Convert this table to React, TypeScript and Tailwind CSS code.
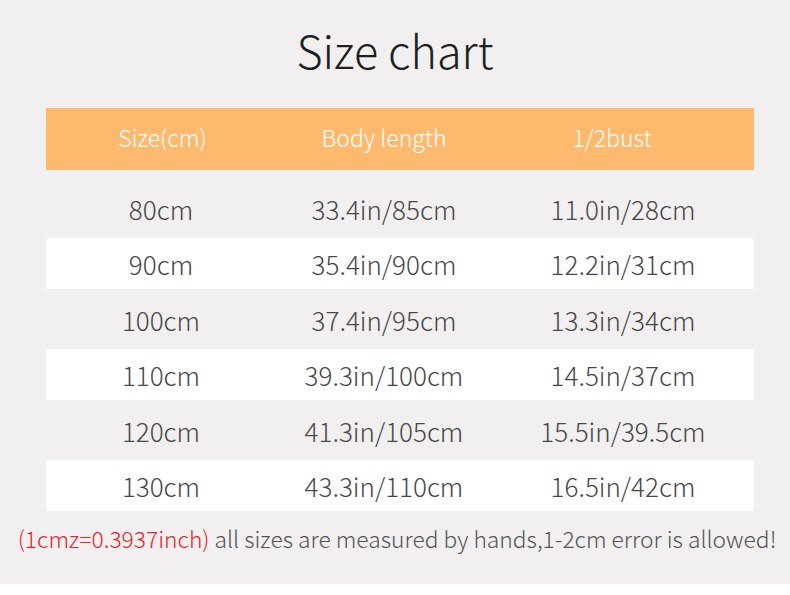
const rows = [
  ['80cm', '33.4in/85cm', '11.0in/28cm'],
  ['90cm', '35.4in/90cm', '12.2in/31cm'],
  ['100cm', '37.4in/95cm', '13.3in/34cm'],
  ['110cm', '39.3in/100cm', '14.5in/37cm'],
  ['120cm', '41.3in/105cm', '15.5in/39.5cm'],
  ['130cm', '43.3in/110cm', '16.5in/42cm'],
]

export default function App() {
  return (
    <div className="w-[790px] h-[595px] bg-white font-['Noto_Sans_CJK_SC','Noto_Sans',sans-serif] font-light">
      <div className="h-[584px] bg-[#f1efef]">
        <h1 className="pt-[27px] text-center text-[45px] leading-none font-light text-[#1f1f1f]">
          Size chart
        </h1>

        <div className="mt-[36px] ml-[46px] w-[708px]">
          <div className="grid h-[62px] grid-cols-[230px_216px_262px] items-center bg-[#fdb96e] pb-[4px] text-[23px] leading-none text-white">
            <div className="text-center pl-[3px]">Size(cm)</div>
            <div className="text-center">Body length</div>
            <div className="text-center pr-[22px]">1/2bust</div>
          </div>

          <div className="pt-[8px]">
            {rows.map((r, i) => (
              <div
                key={r[0]}
                className={
                  i % 2 === 1
                    ? 'grid h-[51px] grid-cols-[230px_216px_262px] items-center bg-white text-[26px] leading-none text-[#474747]'
                    : 'grid h-[60px] grid-cols-[230px_216px_262px] items-center text-[26px] leading-none text-[#474747]'
                }
              >
                {r.map((c) => (
                  <div key={c} className="text-center pt-[1px]">
                    {c}
                  </div>
                ))}
              </div>
            ))}
          </div>
        </div>

        <p className="pt-[17px] pl-[4px] text-center text-[22.8px] leading-none text-[#555555]">
          <span className="text-[#e5252c]">(1cmz=0.3937inch)</span> all sizes are measured by hands,1-2cm error is allowed!
        </p>
      </div>
    </div>
  )
}
